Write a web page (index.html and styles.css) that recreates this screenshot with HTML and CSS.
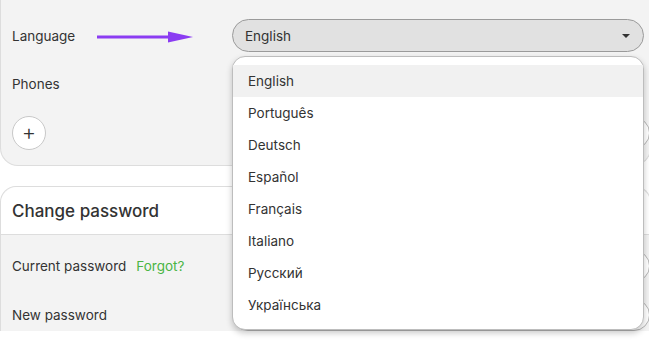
FILE: index.html
```html
<!DOCTYPE html>
<html lang="en">
<head>
<meta charset="utf-8">
<title>Settings</title>
<link rel="stylesheet" href="styles.css">
</head>
<body>
<section class="card card-top">
  <div class="row">
    <div class="label label-arrow">
      <span>Language</span>
      <svg class="arrow" width="100" height="14" viewBox="0 0 100 14">
        <rect x="0" y="5.5" width="74" height="3" fill="#8b3cf2"/>
        <polygon points="71,1.5 96,7 71,12.5" fill="#8b3cf2"/>
      </svg>
    </div>
    <div class="select-wrap">
      <div class="select">
        <span>English</span>
        <span class="caret"></span>
      </div>
      <ul class="menu">
        <li class="active">English</li>
        <li>Português</li>
        <li>Deutsch</li>
        <li>Español</li>
        <li>Français</li>
        <li>Italiano</li>
        <li>Русский</li>
        <li>Українська</li>
      </ul>
    </div>
  </div>
  <div class="row row-phones">
    <div class="label">Phones</div>
    <div></div>
  </div>
  <div class="row row-add">
    <div class="label"><button class="add">+</button></div>
    <div class="input"></div>
  </div>
</section>

<section class="card card-pass">
  <h2 class="card-head">Change password</h2>
  <div class="card-body">
    <div class="row">
      <div class="label">Current password <a class="forgot">Forgot?</a></div>
      <div class="input"></div>
    </div>
    <div class="row">
      <div class="label">New password</div>
      <div class="input"></div>
    </div>
  </div>
</section>
</body>
</html>
```
FILE: styles.css
```css
* { box-sizing: border-box; }
html, body { margin: 0; padding: 0; }
body {
  background: #ffffff;
  font-family: Inter, "Liberation Sans", sans-serif;
  font-size: 13.5px;
  color: #333333;
  width: 649px;
  height: 341px;
  overflow: hidden;
}

.card {
  background: #f3f3f3;
  border: 1px solid #dddddd;
  margin-right: -2px;
}

.card-top {
  border-top: none;
  border-radius: 0 0 18px 18px;
  padding: 19px 6px 15px 11px;
}

.row {
  display: grid;
  grid-template-columns: 220px 1fr;
  align-items: center;
  min-height: 32px;
}

.label {
  display: flex;
  align-items: center;
  gap: 10px;
  white-space: nowrap;
}

.label-arrow { gap: 22px; }
.arrow { display: block; margin-top: 2px; }

.select-wrap { position: relative; }

.select {
  height: 33px;
  border: 1px solid #9a9a9a;
  border-radius: 17px;
  background: #e1e1e1;
  display: flex;
  align-items: center;
  justify-content: space-between;
  padding: 0 13px 0 12px;
  color: #333333;
}

.caret {
  width: 0;
  height: 0;
  border-left: 4px solid transparent;
  border-right: 4px solid transparent;
  border-top: 4px solid #333333;
  margin-top: 1px;
}

.menu {
  position: absolute;
  left: 0;
  right: 0;
  top: 37px;
  margin: 0;
  padding: 8px 0;
  list-style: none;
  background: #ffffff;
  border: 1px solid #bdbdbd;
  border-radius: 13px;
  box-shadow: 0 3px 6px rgba(0, 0, 0, 0.22);
  z-index: 5;
}

.menu li {
  height: 32px;
  line-height: 32px;
  padding-left: 15px;
  color: #333333;
}

.menu li.active { background: #f1f1f1; }

.row-phones { margin-top: 16px; }
.row-add { margin-top: 16px; }

.add {
  width: 34px;
  height: 34px;
  border-radius: 50%;
  border: 1px solid #c8c8c8;
  background: #ffffff;
  color: #333333;
  font-family: Inter, "Liberation Sans", sans-serif;
  font-size: 22px;
  font-weight: 300;
  line-height: 1;
  padding: 0 0 2px 0;
  display: flex;
  align-items: center;
  justify-content: center;
}

.input {
  height: 32px;
  border: 1px solid #b5b5b5;
  border-radius: 16px;
  background: #ffffff;
  margin-right: -6px;
}

.card-pass {
  margin-top: 20px;
  border-radius: 16px 16px 0 0;
  border-bottom: none;
}

.card-head {
  margin: 0;
  height: 48px;
  display: flex;
  align-items: center;
  padding-left: 11px;
  background: #ffffff;
  border-bottom: 1px solid #dddddd;
  border-radius: 16px 16px 0 0;
  font-size: 17px;
  font-weight: 500;
  color: #333333;
}

.card-body {
  padding: 15px 6px 0 11px;
  display: flex;
  flex-direction: column;
  gap: 17px;
}

.forgot {
  color: #4ab544;
  font-size: 13.5px;
}
```
